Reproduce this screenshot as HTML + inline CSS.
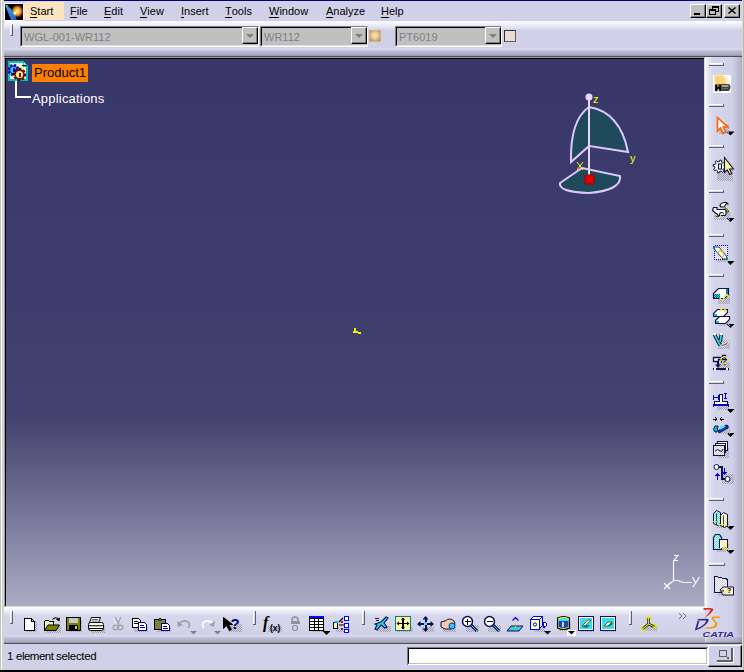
<!DOCTYPE html>
<html><head><meta charset="utf-8">
<style>
*{margin:0;padding:0;box-sizing:border-box}
html,body{width:744px;height:672px;overflow:hidden;background:#d0d0e8;font-family:"Liberation Sans",sans-serif;font-size:11px;color:#000}
.a{position:absolute}
#frameL{left:0;top:0;width:4px;height:672px;background:linear-gradient(90deg,#c0c0c0 0,#c0c0c0 1px,#fff 1px,#fff 2px,#d0d0d0 2px,#d0d0d0 3px,#d4d4d0 3px)}
#topline{left:4px;top:0;width:738px;height:1px;background:#000080}
#frameR{left:742px;top:0;width:2px;height:672px;background:linear-gradient(90deg,#d8d8cc 0,#d8d8cc 1px,#b8b8b4 1px)}
#menubar{left:4px;top:1px;width:738px;height:20px;background:#d0d0e8}
.mi{position:absolute;top:4px;font-size:11px;line-height:14px}
.mi u{text-decoration:none;position:relative}.mi u:after{content:"";position:absolute;left:0;right:0;top:12px;height:1px;background:#000}
#tb1{left:4px;top:21px;width:738px;height:35px;background:linear-gradient(180deg,#fcfcff 0,#f6f6fc 2px,#dedef0 7px,#d0d0e8 9px,#d0d0e8 27px,#e2e2f2 28px,#c8c8de 29px,#b0b0ca 32px,#a8a8c2 34px,#909098 35px)}
#tb1line{left:4px;top:56px;width:738px;height:1px;background:#505050}
#vpborder{left:4px;top:57px;width:701px;height:550px;background:#d8d8d4;border-top:1px solid #a0a0a0;border-left:1px solid #a0a0a0}
#vpblack{left:5px;top:58px;width:699px;height:548px;background:#000}
#vp{left:6px;top:59px;width:698px;height:547px;background:linear-gradient(180deg,#37376a 0,#3e3e6e 250px,#43436f 358px,#58587f 400px,#767698 455px,#acacc6 547px)}
#rtb{left:705px;top:57px;width:37px;height:586px;background:linear-gradient(90deg,#ffffff 0,#f4f4fa 1px,#e0e0f0 4px,#d4d4ea 10px,#d0d0e8 27px,#c4c4dc 31px,#acacc6 37px)}
#btb{left:4px;top:607px;width:701px;height:36px;background:linear-gradient(180deg,#ffffff 0,#f6f6fc 2px,#ececf6 4px,#d6d6ec 9px,#d0d0e8 28px,#e0e0f2 29px,#c8c8de 30px,#b0b0ca 33px,#a8a8c2 35px,#909098 36px)}
#btbline{left:4px;top:643px;width:738px;height:1px;background:#505050}
#status{left:4px;top:644px;width:738px;height:26px;background:#d0d0e8}
#botline{left:0;top:670px;width:744px;height:2px;background:#000}
.combo{position:absolute;top:26px;height:21px;background:#c0c0c0;border-top:1px solid #808080;border-left:1px solid #808080;border-bottom:1px solid #fff;border-right:1px solid #fff}
.combo .in{position:absolute;left:0;top:0;right:0;bottom:0;border-top:1px solid #000;border-left:1px solid #000;border-bottom:1px solid #dfdfdf;border-right:1px solid #dfdfdf}
.combo .txt{position:absolute;left:3px;top:3px;font-size:11px;color:#808080;line-height:14px}
.combo .btn{position:absolute;right:0;top:0;width:16px;height:17px;background:#c0c0c0;border-top:1px solid #fff;border-left:1px solid #fff;border-right:1px solid #000;border-bottom:1px solid #000;box-shadow:inset -1px -1px 0 #808080}
.combo .btn:after{content:"";position:absolute;left:3px;top:6px;border-left:4px solid transparent;border-right:4px solid transparent;border-top:4px solid #808080}
.grip{position:absolute;width:3px;border-left:1px solid #fff;border-top:1px solid #fff;border-right:1px solid #606060;border-bottom:1px solid #606060}
.hgrip{position:absolute;height:3px;width:14px;border-left:1px solid #fff;border-top:1px solid #fff;border-right:1px solid #606060;border-bottom:1px solid #606060}
.wbtn{position:absolute;top:4px;width:16px;height:14px;background:#c0c0c0;border-top:1px solid #fff;border-left:1px solid #fff;border-right:1px solid #000;border-bottom:1px solid #000;box-shadow:inset -1px -1px 0 #808080}
</style></head><body>
<div id="frameL" class="a"></div>
<div id="topline" class="a"></div>
<div id="frameR" class="a"></div>
<div id="menubar" class="a"></div>
<div class="a" style="left:4px;top:1px;width:738px;height:1px;background:#d8d8dc"></div>
<!-- logo -->
<div class="a" style="left:4px;top:3px;width:20px;height:18px;background:#fff"></div>
<div class="a" style="left:5px;top:4px;width:18px;height:16px;background:#000;overflow:hidden">
 <svg width="18" height="16" viewBox="0 0 18 16"><defs>
 <radialGradient id="lg" cx="0.62" cy="0.45" r="0.45"><stop offset="0" stop-color="#fffce0"/><stop offset="0.25" stop-color="#ffd040"/><stop offset="0.6" stop-color="#e07020"/><stop offset="1" stop-color="#401030" stop-opacity="0"/></radialGradient>
 <linearGradient id="lb" x1="0" y1="0" x2="1" y2="1"><stop offset="0" stop-color="#40a0ff"/><stop offset="1" stop-color="#2060c0"/></linearGradient></defs>
 <rect x="3" y="0" width="15" height="16" fill="url(#lg)"/>
 <path d="M0 1 L2.5 1 L12 15.5 L8.5 16 L6 16 Z" fill="url(#lb)"/>
 <path d="M4 4 L10 13 L11 12 L5 3.5Z" fill="#30d0d0" opacity="0.7"/>
 <circle cx="10" cy="9" r="1.5" fill="#fff" opacity="0.8"/>
 </svg>
</div>
<div class="a" style="left:24px;top:2px;width:40px;height:18px;background:#fce4c0"></div>
<div class="mi" style="left:30px"><u>S</u>tart</div>
<div class="mi" style="left:70px"><u>F</u>ile</div>
<div class="mi" style="left:104px"><u>E</u>dit</div>
<div class="mi" style="left:140px"><u>V</u>iew</div>
<div class="mi" style="left:181px"><u>I</u>nsert</div>
<div class="mi" style="left:225px"><u>T</u>ools</div>
<div class="mi" style="left:269px"><u>W</u>indow</div>
<div class="mi" style="left:326px"><u>A</u>nalyze</div>
<div class="mi" style="left:381px"><u>H</u>elp</div>
<div class="wbtn" style="left:690px"></div>
<div class="wbtn" style="left:706px"></div>
<div class="wbtn" style="left:724px"></div>
<svg class="a" style="left:688px;top:3px" width="54" height="17" viewBox="688 3 54 17" shape-rendering="crispEdges">
<rect x="694" y="13" width="6" height="2" fill="#000"/>
<rect x="712" y="6" width="6" height="5" fill="none" stroke="#000"/><rect x="712" y="6" width="6" height="1" fill="#000"/>
<rect x="712" y="6.5" width="6" height="1.5" fill="#000"/>
<rect x="709.5" y="9.5" width="6" height="5" fill="#c0c0c0" stroke="#000"/>
<rect x="709.5" y="9.5" width="6" height="1.5" fill="#000"/>
<path d="M728.5 7.5 l7 6 M735.5 7.5 l-7 6" stroke="#000" stroke-width="1.6" shape-rendering="auto"/>
</svg>

<div id="tb1" class="a"></div>
<div id="tb1line" class="a"></div>
<div class="grip" style="left:10px;top:24px;height:12px"></div>
<div class="combo" style="left:20px;width:239px"><div class="in"></div><div class="txt">WGL-001-WR112</div><div class="btn"></div></div>
<div class="combo" style="left:260px;width:108px"><div class="in"></div><div class="txt">WR112</div><div class="btn"></div></div>
<div class="a" style="left:369px;top:30px;width:12px;height:12px;background:radial-gradient(circle at 50% 45%,#f8e8c8 0,#e8c890 45%,#b08048 100%);border:1px solid #d0b080"></div>
<div class="combo" style="left:395px;width:107px"><div class="in"></div><div class="txt">PT6019</div><div class="btn"></div></div>
<div class="a" style="left:504px;top:30px;width:12px;height:12px;background:#eadcd2;border:1px solid #303030;border-right-color:#606060;border-bottom-color:#606060"></div>

<div id="vpborder" class="a"></div>
<div id="vpblack" class="a"></div>
<div id="vp" class="a"></div>


<!-- tree -->
<div class="a" style="left:8px;top:61px;width:20px;height:21px">
<svg width="20" height="21" viewBox="8 61 20 21" shape-rendering="crispEdges">
<path d="M9 62 H23 L27 66 V80 H9 Z" fill="url(#dy)" stroke="#00c0c8" stroke-width="2"/>
<path d="M23 62 V66 H27" fill="#a0f0f0" stroke="#00c0c8" stroke-width="1"/>
<rect x="22" y="65" width="5" height="1" fill="#101040"/>
<path d="M17.7 70.3 L19.2 70.8 L18.7 72.6 L17.1 72.1 L16.3 73.2 L17.0 74.6 L15.4 75.5 L14.5 74.1 L13.2 74.2 L12.7 75.7 L10.9 75.2 L11.4 73.6 L10.3 72.8 L8.9 73.5 L8.0 71.9 L9.4 71.0 L9.3 69.7 L7.8 69.2 L8.3 67.4 L9.9 67.9 L10.7 66.8 L10.0 65.4 L11.6 64.5 L12.5 65.9 L13.8 65.8 L14.3 64.3 L16.1 64.8 L15.6 66.4 L16.7 67.2 L18.1 66.5 L19.0 68.1 L17.6 69.0Z" fill="#0000ff" stroke="#000060" stroke-width="0.6" shape-rendering="auto"/>
<circle cx="13.5" cy="70" r="3.2" fill="#30d0ff" shape-rendering="auto"/>
<rect x="12.5" y="68" width="2" height="4" fill="#0000a0"/>
<path d="M24.1 73.9 L25.7 74.1 L25.5 76.1 L23.8 76.0 L23.2 77.3 L24.1 78.6 L22.6 79.9 L21.5 78.6 L20.1 79.1 L19.9 80.7 L17.9 80.5 L18.0 78.8 L16.7 78.2 L15.4 79.1 L14.1 77.6 L15.4 76.5 L14.9 75.1 L13.3 74.9 L13.5 72.9 L15.2 73.0 L15.8 71.7 L14.9 70.4 L16.4 69.1 L17.5 70.4 L18.9 69.9 L19.1 68.3 L21.1 68.5 L21.0 70.2 L22.3 70.8 L23.6 69.9 L24.9 71.4 L23.6 72.5Z" fill="#c00000" stroke="#000" stroke-width="0.9" shape-rendering="auto"/>
<circle cx="19.5" cy="74.5" r="3.6" fill="#f8f080" shape-rendering="auto"/>
<rect x="18.5" y="72.5" width="2" height="4" fill="#a00000"/>
</svg></div>
<div class="a" style="left:15px;top:81px;width:2px;height:17px;background:#fff"></div>
<div class="a" style="left:15px;top:96px;width:16px;height:2px;background:#fff"></div>
<div class="a" style="left:32px;top:64px;width:56px;height:18px;background:#ff8000;border-radius:1px"></div>
<div class="a" style="left:34px;top:65px;font-size:13px;line-height:16px;color:#000">Product1</div>
<div class="a" style="left:32px;top:91px;font-size:13px;line-height:16px;color:#fff;letter-spacing:0.2px">Applications</div>
<!-- compass -->
<svg class="a" style="left:540px;top:80px" width="120" height="120" viewBox="540 80 120 120">
<path d="M589 146 L589 107 Q620 112 628 152 Z" fill="#1f4a5c" stroke="#e0c8f8" stroke-width="2"/>
<path d="M589 146 L589 107 Q570 120 571 162 Z" fill="#1f4a5c" stroke="#e0c8f8" stroke-width="2"/>
<path d="M582 168 L620 176 Q622 190 589 193 Q558 192 560 183 Z" fill="#1f4a5c" stroke="#e0c8f8" stroke-width="2"/>
<line x1="589" y1="98" x2="589" y2="176" stroke="#e8d8ff" stroke-width="2"/>
<circle cx="589" cy="97" r="3.5" fill="#e8d8ff"/>
<rect x="585" y="175" width="9" height="9" fill="#e00000" stroke="#a00000"/>
<text x="593" y="103" font-size="11" fill="#ffff00" font-family="Liberation Sans">z</text>
<text x="630" y="162" font-size="11" fill="#ffff00" font-family="Liberation Sans">y</text>
<path d="M577 162 L583 170 M583 162 L577 170" stroke="#ffff00" stroke-width="1"/>
</svg>
<!-- small yellow mark -->
<div class="a" style="left:354px;top:328px;width:2px;height:5px;background:#f0f000"></div><div class="a" style="left:353px;top:331px;width:5px;height:2px;background:#f0f000"></div><div class="a" style="left:358px;top:332px;width:3px;height:2px;background:#f0f000"></div>
<!-- axis bottom right -->
<svg class="a" style="left:655px;top:548px" width="50" height="50" viewBox="655 548 50 50">
<g stroke="#fff" fill="none" stroke-width="1.1">
<path d="M673.5 561 V580.5"/>
<path d="M674 555.5 H678 L674 560.5 H678"/>
<path d="M673.5 580.5 L666.5 586.5"/>
<path d="M664 583 L670 589 M670 583 L664 589"/>
<path d="M673.5 580.5 H678 L683 582.5 H692"/>
<path d="M692.5 577 L696 583.5 M699.5 577 L693 587"/>
</g></svg>
<div id="rtb" class="a"></div>
<!--RTBICONS-->
<svg class="a" style="left:0;top:0" width="744" height="672" viewBox="0 0 744 672" shape-rendering="crispEdges">
<defs>
<pattern id="sh" width="2" height="2" patternUnits="userSpaceOnUse"><rect x="0" y="0" width="1" height="1" fill="#a0a0ac"/><rect x="1" y="1" width="1" height="1" fill="#a0a0ac"/></pattern>
<pattern id="dy" width="2" height="2" patternUnits="userSpaceOnUse"><rect width="2" height="2" fill="#fff"/><rect x="0" y="0" width="1" height="1" fill="#f8e878"/><rect x="1" y="1" width="1" height="1" fill="#f8e878"/></pattern>
<pattern id="dc" width="2" height="2" patternUnits="userSpaceOnUse"><rect width="2" height="2" fill="#40e0f0"/><rect x="0" y="0" width="1" height="1" fill="#fff"/><rect x="1" y="1" width="1" height="1" fill="#fff"/></pattern>
<pattern id="dw" width="2" height="2" patternUnits="userSpaceOnUse"><rect width="2" height="2" fill="#fff"/><rect x="0" y="0" width="1" height="1" fill="#c8c8e0"/><rect x="1" y="1" width="1" height="1" fill="#c8c8e0"/></pattern>
<pattern id="dt" width="2" height="2" patternUnits="userSpaceOnUse"><rect width="2" height="2" fill="#008080"/><rect x="0" y="0" width="1" height="1" fill="#40c0c0"/><rect x="1" y="1" width="1" height="1" fill="#40c0c0"/></pattern>
</defs>
<!-- separators right toolbar -->
<g>
<rect x="709" y="63" width="15" height="1" fill="#fff"/><rect x="709" y="65" width="15" height="1" fill="#606070"/><rect x="723" y="63" width="1" height="3" fill="#606070"/><rect x="709" y="64" width="13" height="1" fill="#e8e8f4"/>
<rect x="709" y="104" width="15" height="1" fill="#fff"/><rect x="709" y="106" width="15" height="1" fill="#606070"/><rect x="723" y="104" width="1" height="3" fill="#606070"/>
<rect x="709" y="145" width="15" height="1" fill="#fff"/><rect x="709" y="147" width="15" height="1" fill="#606070"/><rect x="723" y="145" width="1" height="3" fill="#606070"/>
<rect x="709" y="190" width="15" height="1" fill="#fff"/><rect x="709" y="192" width="15" height="1" fill="#606070"/><rect x="723" y="190" width="1" height="3" fill="#606070"/>
<rect x="709" y="234" width="15" height="1" fill="#fff"/><rect x="709" y="236" width="15" height="1" fill="#606070"/><rect x="723" y="234" width="1" height="3" fill="#606070"/>
<rect x="709" y="274" width="15" height="1" fill="#fff"/><rect x="709" y="276" width="15" height="1" fill="#606070"/><rect x="723" y="274" width="1" height="3" fill="#606070"/>
<rect x="709" y="381" width="15" height="1" fill="#fff"/><rect x="709" y="383" width="15" height="1" fill="#606070"/><rect x="723" y="381" width="1" height="3" fill="#606070"/>
<rect x="709" y="498" width="15" height="1" fill="#fff"/><rect x="709" y="500" width="15" height="1" fill="#606070"/><rect x="723" y="498" width="1" height="3" fill="#606070"/>
<rect x="709" y="563" width="16" height="1" fill="#fff"/><rect x="709" y="565" width="16" height="1" fill="#606070"/><rect x="724" y="563" width="1" height="3" fill="#606070"/>
</g>
<!-- dropdown triangles -->
<g fill="#000" shape-rendering="auto">
<path d="M726.5 131.5 h8 l-4 4z"/>
<path d="M726.5 218 h8 l-4 4z"/>
<path d="M726.5 261 h8 l-4 4z"/>
<path d="M726.5 324 h8 l-4 4z"/>
<path d="M726.5 409 h8 l-4 4z"/>
<path d="M726.5 433 h8 l-4 4z"/>
<path d="M726.5 526 h8 l-4 4z"/>
<path d="M726.5 550 h8 l-4 4z"/>
</g>
<!-- icon1 projector -->
<rect x="713" y="75" width="18" height="18" fill="#fff"/>
<path d="M714 75.5 L723 75.5 Q726 78 726 84 L715 85 Z" fill="#f8d474" shape-rendering="auto"/>
<path d="M723 75.5 Q728 77 730 83 L726 84 Q726 78 723 75.5 Z" fill="#fcecc4" shape-rendering="auto"/>
<path d="M718 84 L729 84 Q731 85 730.5 88 L729 91 L720 91 Z" fill="#404040" shape-rendering="auto"/>
<path d="M719 85 L729 85 L728 87 L720 87 Z" fill="#a0a0a0" shape-rendering="auto"/>
<path d="M720 88.5 L728 88.5" stroke="#707070" stroke-width="0.8" shape-rendering="auto"/>
<path d="M715 84.5 h2.5 v2 h1.5 v-2 h2.5 v6.5 h-2.5 v-2 h-1.5 v2 h-2.5 z" fill="#000" stroke="#807040" stroke-width="0.6" shape-rendering="auto"/>
<!-- icon2 arrow -->
<rect x="719" y="124" width="10" height="10" fill="url(#sh)"/>
<path d="M717.5 117.5 L717.5 131 L720.5 128 L723 133.5 L725.5 132 L723.2 127 L727.5 127 Z" fill="#fff" stroke="#ff6000" stroke-width="1.6" shape-rendering="auto"/>
<!-- icon3 gear + arrow -->
<rect x="717" y="169" width="16" height="12" fill="url(#sh)"/>
<path d="M724.3 166.4 L726.0 166.9 L725.6 168.7 L723.9 168.4 L722.9 169.8 L723.8 171.4 L722.3 172.4 L721.2 171.0 L719.6 171.3 L719.1 173.0 L717.3 172.6 L717.6 170.9 L716.2 169.9 L714.6 170.8 L713.6 169.3 L715.0 168.2 L714.7 166.6 L713.0 166.1 L713.4 164.3 L715.1 164.6 L716.1 163.2 L715.2 161.6 L716.7 160.6 L717.8 162.0 L719.4 161.7 L719.9 160.0 L721.7 160.4 L721.4 162.1 L722.8 163.1 L724.4 162.2 L725.4 163.7 L724.0 164.8Z" fill="#fff" stroke="#101040" stroke-width="1" shape-rendering="auto"/>
<path d="M718.5 164 v5 h3 v-5 z" fill="none" stroke="#101040" stroke-width="1.2" shape-rendering="auto"/>
<path d="M724.5 157.5 L724.5 172.5 L727.2 170 L729.8 174.6 L731.8 173.6 L729.5 169 L733.5 169 Z" fill="#f8f890" stroke="#101040" stroke-width="1.1" shape-rendering="auto"/>
<!-- icon4 sketch hammer -->
<rect x="714" y="212" width="16" height="8" fill="url(#sh)"/>
<path d="M713.5 207.5 h3.5 v2 h9 v5 l-1 1 h-7 l-1 -2 h-1 l-3.5 -3z" fill="#fff" stroke="#101050" stroke-width="1.2" shape-rendering="auto"/>
<path d="M715 215.5 q1 2 3 1.5 q1.5 -0.5 1.5 -2.5 q0.5 -2 2 -2 q2 0 2 2" fill="none" stroke="#101010" stroke-width="1.2" shape-rendering="auto"/>
<path d="M714.5 214.5 q0 3.5 3.5 3.5 q2.5 0 2.5 -3 q0.5 -1.5 1.5 -1.5 q1.5 0 1.5 1.5" fill="none" stroke="#f8f0a0" stroke-width="0.9" shape-rendering="auto"/>
<path d="M720 205 q1 -2 4 -2.5 q3 -0.5 4 1.5 l-2 0 l-2 3 l-2 0 q-2 0 -2 -2z" fill="#fff" stroke="#101010" stroke-width="1.1" shape-rendering="auto"/>
<path d="M724.5 208 l4 4" stroke="#101010" stroke-width="2.2" shape-rendering="auto"/>
<path d="M724.5 208 l4 4" stroke="#f0e000" stroke-width="1.2" stroke-dasharray="1.2 0.6" shape-rendering="auto"/>
<!-- icon5 dotted box sketch -->
<rect x="716" y="250" width="12" height="12" fill="url(#sh)"/>
<rect x="714.5" y="245.5" width="13" height="14" fill="url(#dw)" stroke="#0000ff" stroke-dasharray="1 1"/>
<path d="M714 247 h5 l8 10 v2 h-4 l-8 -9z" fill="#fff" stroke="#303050" stroke-width="1" shape-rendering="auto"/>
<rect x="713" y="246" width="2" height="3" fill="#009090"/><rect x="726" y="257" width="2" height="3" fill="#009090"/>
<path d="M718 253 q3 -4 5 0 q2 4 -2 4" fill="none" stroke="#e8d020" stroke-width="1.5" shape-rendering="auto"/>
<!-- icon6 block S -->
<rect x="718" y="294" width="12" height="10" fill="url(#sh)"/>
<path d="M713.5 293.5 l5 -5 h10 v6 l-4 4 h-11z" fill="#fff" stroke="#101050" stroke-width="1.2" shape-rendering="auto"/>
<rect x="714" y="294" width="6" height="4" fill="url(#dt)"/>
<rect x="726" y="289" width="2" height="5" fill="#009090"/>
<path d="M720 298 q2 4 4 0 q2 -5 5 -1" fill="none" stroke="#f0e040" stroke-width="1.6" shape-rendering="auto"/>
<!-- icon7 -->
<rect x="719" y="316" width="11" height="10" fill="url(#sh)"/>
<path d="M713.5 313.5 l4 -4 h10 v3 l-4 4 h-10z" fill="#fff" stroke="#101050" stroke-width="1.1" shape-rendering="auto"/>
<path d="M715.5 320.5 l4 -4 h10 v3 l-4 4 h-10z" fill="#fff" stroke="#101050" stroke-width="1.1" shape-rendering="auto"/>
<rect x="714" y="314" width="3" height="2" fill="#00c0d0"/><rect x="716" y="321" width="3" height="2" fill="#00c0d0"/>
<path d="M720 311 q2 -4 5 -2 q-1 4 2 2" fill="none" stroke="#f0e040" stroke-width="1.5" shape-rendering="auto"/>
<!-- icon8 V -->
<rect x="718" y="340" width="12" height="9" fill="url(#sh)"/>
<path d="M721.5 344 q3 1 5.5 -2 l2 -1 q-1 4 -4 5 q-3 1 -4.5 -1z" fill="#606060" stroke="#fff" stroke-width="0.8" shape-rendering="auto"/>
<path d="M714.5 334.5 l4.5 9 l1.5 1.5 M721.5 334 l-1.5 8" stroke="#000" stroke-width="3.6" fill="none" shape-rendering="auto"/>
<path d="M714.5 334.5 l4.5 9 l1.5 1.5 M721.5 334 l-1.5 8" stroke="#30d8e8" stroke-width="1.8" fill="none" shape-rendering="auto"/>
<rect x="713" y="333" width="3" height="2" fill="#fff"/><rect x="720" y="333" width="3" height="2" fill="#fff"/>
<!-- icon9 -->
<rect x="719" y="362" width="11" height="9" fill="url(#sh)"/>
<path d="M713.5 357.5 h9 v-2 h3 v4 h-7 v2 h-5z" fill="#fff" stroke="#101050" stroke-width="1.3" shape-rendering="auto"/>
<path d="M721.5 362.5 q-1 -3 1.5 -4.5 q2.5 -1 3.5 1 q0.5 1.5 -1.5 2.5 q-2 1 -1.5 2.5 q0.5 1 2 0.5" fill="none" stroke="#101010" stroke-width="1" shape-rendering="auto"/>
<path d="M721 361 q-0.5 -3 2 -4 q3 -1 3.5 1.5 M722 363.5 q2 1 4 -1" fill="none" stroke="#f0e040" stroke-width="1.3" shape-rendering="auto"/>
<rect x="717" y="361" width="2" height="4" fill="#101050"/><path d="M715 364.5 h6 l-3 3.5z" fill="#101050" shape-rendering="auto"/>
<rect x="713" y="368" width="16" height="2" fill="#101050"/><rect x="714" y="368" width="2" height="2" fill="#fff"/><rect x="726" y="368" width="2" height="2" fill="#fff"/>
<!-- icon10 dimension -->
<rect x="717" y="402" width="12" height="8" fill="url(#sh)"/>
<rect x="713" y="395" width="1" height="5" fill="#0000ff"/><rect x="713" y="397" width="6" height="1" fill="#0000ff"/><rect x="718" y="395" width="1" height="5" fill="#0000ff"/>
<rect x="724" y="393" width="3" height="1" fill="#0000ff"/><rect x="725" y="393" width="1" height="6" fill="#0000ff"/><rect x="724" y="398" width="3" height="1" fill="#0000ff"/>
<path d="M714 401 h5 v-7 h3 v7 h5 v3 h-13z" fill="#fff" stroke="#101050" stroke-width="1"/>
<rect x="713" y="405" width="16" height="1" fill="#0000ff"/><rect x="713" y="404" width="1" height="3" fill="#0000ff"/><rect x="728" y="404" width="1" height="3" fill="#0000ff"/>
<!-- icon11 arrows + blue -->
<rect x="720" y="426" width="10" height="8" fill="url(#sh)"/>
<path d="M713 419 h4 M715 417 l2 2 l-2 2 M724 419 h-4 M722 417 l-2 2 l2 2" stroke="#000" stroke-width="1" fill="none"/>
<path d="M715 432 q-3 -2 0 -6 l3 0 l-1 6z" fill="#00c0e0" stroke="#101050" shape-rendering="auto"/>
<path d="M718 431 l8 -6 q3 0 2 3 l-9 5z" fill="#0040c0" stroke="#101050" shape-rendering="auto"/>
<path d="M720 429 l5 -3" stroke="#40e0f0" stroke-width="1.5" shape-rendering="auto"/>
<!-- icon12 sheets -->
<rect x="718" y="448" width="11" height="10" fill="url(#sh)"/>
<rect x="717.5" y="441.5" width="10" height="9" fill="#fff" stroke="#101050"/>
<rect x="715.5" y="443.5" width="10" height="9" fill="#fff" stroke="#101050"/>
<rect x="713.5" y="445.5" width="11" height="10" fill="url(#dw)" stroke="#101050" stroke-width="1.2"/>
<path d="M715 451 q3 -3 5 0 q2 2 3 -2" stroke="#101050" fill="none" shape-rendering="auto"/>
<!-- icon13 graph -->
<rect x="722" y="474" width="12" height="10" fill="url(#sh)"/>
<path d="M718 467 h4 v12 h4" stroke="#101050" stroke-width="1.2" fill="none"/>
<ellipse cx="716.5" cy="467" rx="2.5" ry="2.5" fill="#fff" stroke="#101050" shape-rendering="auto"/>
<ellipse cx="727.5" cy="479" rx="2.5" ry="2.5" fill="#fff" stroke="#101050" shape-rendering="auto"/>
<rect x="724" y="468" width="1" height="5" fill="#0000ff"/><path d="M722 472 h5 l-2.5 3z" fill="#0000ff"/>
<rect x="717" y="475" width="1" height="5" fill="#0000ff"/><path d="M715 476 h5 l-2.5 -3z" fill="#0000ff"/>
<!-- icon14 two boxes -->
<rect x="717" y="522" width="12" height="6" fill="url(#sh)"/>
<path d="M713.5 513.5 L716.5 510.5 L720.5 512.5 V523.5 L717.5 525.5 L713.5 523.5 Z" fill="url(#dc)" stroke="#101050" shape-rendering="auto"/>
<path d="M716.5 513.5 V525" stroke="#101050" stroke-width="0.8" shape-rendering="auto"/>
<path d="M720.5 515.5 L723.5 512.5 L727.5 514.5 V525.5 L724.5 527.5 L720.5 525.5 Z" fill="url(#dy)" stroke="#101050" shape-rendering="auto"/>
<path d="M723.5 515.5 V527" stroke="#101050" stroke-width="0.8" shape-rendering="auto"/>
<rect x="712" y="521" width="6" height="1" fill="#e8e000"/><rect x="718" y="524" width="7" height="1" fill="#e8e000"/>
<!-- icon15 -->
<rect x="717" y="544" width="12" height="8" fill="url(#sh)"/>
<path d="M713.5 537.5 l2 -3 h4 l2 3 v12 h-8z" fill="url(#dc)" stroke="#101050" stroke-width="1.2" shape-rendering="auto"/>
<rect x="719.5" y="539.5" width="8" height="8" fill="url(#dy)" stroke="#101050"/>
<rect x="720" y="543" width="2" height="5" fill="#fff"/><rect x="722" y="547" width="5" height="2" fill="#e0e000"/>
<!-- icon16 folder tag -->
<rect x="718" y="590" width="15" height="6" fill="url(#sh)"/>
<path d="M714.5 576.5 h3 l1 1 h3 l1 1 h3 l2 1 v13 h-13z" fill="url(#dw)" stroke="#101050" stroke-width="1.1"/>
<path d="M720 590 l3 -3 h10.5 v8 h-10.5z" fill="url(#dy)" stroke="#101050" shape-rendering="auto"/>
<circle cx="722.5" cy="591" r="1" fill="none" stroke="#404040" shape-rendering="auto"/>
<text x="727" y="593" font-size="7" font-weight="bold" font-family="Liberation Sans" fill="#000">?</text>
</svg>

<!--/RTBICONS-->
<div id="btb" class="a"></div>
<div class="a" style="left:705px;top:609px;width:8px;height:26px;background:linear-gradient(90deg,#d0d0e8 0,rgba(210,210,234,0) 8px)"></div>
<div id="btbline" class="a"></div>
<div class="a" style="left:705px;top:635px;width:37px;height:8px;background:linear-gradient(180deg,rgba(255,255,255,0) 0,rgba(255,255,255,.35) 1px,rgba(120,120,150,.15) 2px,rgba(90,90,130,.3) 7px,rgba(60,60,60,.6) 8px)"></div>
<!--BTBICONS-->
<svg class="a" style="left:0;top:0" width="744" height="672" viewBox="0 0 744 672" shape-rendering="crispEdges">
<!-- grips -->
<g>
<rect x="10" y="611" width="1" height="13" fill="#fff"/><rect x="12" y="611" width="1" height="13" fill="#606070"/><rect x="10" y="623" width="3" height="1" fill="#606070"/>
<rect x="253" y="611" width="1" height="13" fill="#fff"/><rect x="255" y="611" width="1" height="13" fill="#606070"/><rect x="253" y="624" width="3" height="1" fill="#606070"/>
<rect x="362" y="611" width="1" height="13" fill="#fff"/><rect x="364" y="611" width="1" height="13" fill="#606070"/><rect x="362" y="624" width="3" height="1" fill="#606070"/>
<rect x="629" y="611" width="1" height="13" fill="#fff"/><rect x="631" y="611" width="1" height="13" fill="#606070"/><rect x="629" y="624" width="3" height="1" fill="#606070"/>
</g>
<!-- new -->
<rect x="26" y="621" width="11" height="11" fill="url(#sh)"/>
<path d="M24.5 618.5 h7 l3 3 v9 h-10z" fill="#fff" stroke="#000"/>
<path d="M31.5 618.5 v3 h3" fill="none" stroke="#000"/>
<!-- open -->
<rect x="46" y="626" width="15" height="7" fill="url(#sh)"/>
<path d="M44.5 621.5 l1 -1.5 h3 l1 1.5 h4 v9 h-9z" fill="url(#dy)" stroke="#000"/>
<path d="M44.5 630.5 l3.5 -5.5 h11.5 l-3.5 5.5z" fill="#808000" stroke="#000" shape-rendering="auto"/>
<path d="M52.5 619.5 q2.5 -3 5.5 -1" fill="none" stroke="#000" stroke-width="1.1" shape-rendering="auto"/>
<path d="M56 619.5 l3.5 2 l0.5 -4z" fill="#000" shape-rendering="auto"/>
<!-- save -->
<rect x="69" y="621" width="13" height="11" fill="url(#sh)"/>
<rect x="66.5" y="617.5" width="14" height="13" fill="#808000" stroke="#000"/>
<rect x="69" y="618" width="9" height="5" fill="#c8c8c8"/>
<rect x="69" y="625" width="9" height="5" fill="#000"/>
<rect x="75" y="626" width="2" height="3" fill="#c0c0c0"/>
<!-- print -->
<rect x="91" y="626" width="14" height="7" fill="url(#sh)"/>
<path d="M91.5 617.5 h9 l-2 5 h-9z" fill="#fff" stroke="#000" shape-rendering="auto"/>
<path d="M92 619.5 h6 M91.5 621 h6" stroke="#000" stroke-width="0.6" shape-rendering="auto"/>
<rect x="88.5" y="622.5" width="15" height="8" rx="2" fill="#fff" stroke="#000" shape-rendering="auto"/>
<rect x="89" y="625" width="14" height="2" fill="#404040"/>
<rect x="89" y="626" width="14" height="1" fill="#c0c0c0"/>
<rect x="94" y="626" width="4" height="1" fill="#e0c000"/>
<rect x="89" y="628" width="14" height="1" fill="#000"/>
<!-- cut -->
<path d="M115 617 l4 8 M121 617 l-4 8" stroke="#a0a0a8" stroke-width="1.2" fill="none" shape-rendering="auto"/>
<circle cx="115.5" cy="627.5" r="2.3" fill="none" stroke="#a0a0a8" stroke-width="1.2" shape-rendering="auto"/>
<circle cx="120.5" cy="627.5" r="2.3" fill="none" stroke="#a0a0a8" stroke-width="1.2" shape-rendering="auto"/>
<path d="M113 618 l4 7" stroke="#fff" stroke-width="0.8" shape-rendering="auto"/>
<!-- copy -->
<rect x="134" y="627" width="14" height="5" fill="url(#sh)"/>
<path d="M132.5 618.5 h6 l2 2 v7 h-8z" fill="#fff" stroke="#000"/>
<rect x="134" y="621" width="4" height="1" fill="#000"/><rect x="134" y="623" width="5" height="1" fill="#000"/>
<path d="M138.5 622.5 h6 l2 2 v6 h-8z" fill="#fff" stroke="#000080" stroke-width="1.2"/>
<rect x="140" y="625" width="4" height="1" fill="#000080"/><rect x="140" y="627" width="5" height="1" fill="#000080"/>
<!-- paste -->
<rect x="157" y="627" width="14" height="5" fill="url(#sh)"/>
<rect x="154.5" y="619.5" width="11" height="10" fill="#808040" stroke="#000"/>
<rect x="155" y="620" width="10" height="9" fill="url(#dol)"/>
<path d="M158 620 l2 -2 l2 2z" fill="#ffff40" stroke="#000" shape-rendering="auto"/>
<path d="M161.5 623.5 h6 l2 2 v5 h-8z" fill="#fff" stroke="#000080" stroke-width="1.2"/>
<rect x="163" y="626" width="4" height="1" fill="#000080"/><rect x="163" y="628" width="5" height="1" fill="#000080"/>
<!-- undo -->
<path d="M179 624 q4 -5 9 -2 q3 3 0 6" fill="none" stroke="#a0a0a8" stroke-width="1.6" shape-rendering="auto"/>
<path d="M177 621 l1 6 l5 -2z" fill="#a0a0a8" shape-rendering="auto"/>
<path d="M190 631 h7 l-3.5 3.5z" fill="#808088" shape-rendering="auto"/>
<!-- redo -->
<path d="M213 624 q-4 -5 -9 -2 q-3 3 0 6" fill="none" stroke="#fff" stroke-width="1.6" shape-rendering="auto"/>
<path d="M215 621 l-1 6 l-5 -2z" fill="#a0a0a8" shape-rendering="auto"/>
<path d="M214 631 h7 l-3.5 3.5z" fill="#808088" shape-rendering="auto"/>
<!-- help -->
<rect x="228" y="624" width="14" height="8" fill="url(#sh)"/>
<path d="M223.5 617.5 v11 l3 -3 l3 5 l2 -1 l-3 -5 h4z" fill="#000" stroke="#000" shape-rendering="auto"/>
<text x="230.5" y="628.5" font-size="15" font-weight="bold" font-family="Liberation Sans" fill="#000080">?</text>
<!-- fx -->
<rect x="268" y="626" width="14" height="6" fill="url(#sh)"/>
<text x="263" y="628" font-size="16" font-style="italic" font-weight="bold" font-family="Liberation Serif" fill="#000">f</text>
<text x="270" y="630.5" font-size="8.5" font-weight="bold" font-family="Liberation Sans" fill="#000">(x)</text>
<!-- lock gray -->
<path d="M292 622 v-2 q0 -3 3 -3 q3 0 3 3 v2" fill="none" stroke="#909098" stroke-width="1.5" shape-rendering="auto"/>
<rect x="291" y="621" width="9" height="3" fill="#909098"/>
<circle cx="295" cy="628" r="2.5" fill="none" stroke="#909098" stroke-width="1.2" shape-rendering="auto"/>
<!-- table -->
<rect x="312" y="628" width="13" height="4" fill="url(#sh)"/>
<rect x="309" y="616" width="15" height="15" fill="#000"/>
<rect x="309" y="616" width="15" height="2" fill="#0000ff"/>
<g fill="#fff">
<rect x="310" y="619" width="4" height="2"/><rect x="315" y="619" width="3" height="2"/><rect x="319" y="619" width="4" height="2"/>
<rect x="310" y="622" width="4" height="2"/><rect x="315" y="622" width="3" height="2"/><rect x="319" y="622" width="4" height="2"/>
<rect x="310" y="625" width="4" height="2"/><rect x="315" y="625" width="3" height="2"/><rect x="319" y="625" width="4" height="2"/>
<rect x="310" y="628" width="4" height="2"/><rect x="315" y="628" width="3" height="2"/><rect x="319" y="628" width="4" height="2"/>
</g>
<path d="M322.5 631 h8 l-4 4z" fill="#000" shape-rendering="auto"/>
<!-- tree -->
<rect x="336" y="628" width="14" height="4" fill="url(#sh)"/>
<rect x="333.5" y="622.5" width="4" height="6" fill="#ffff80" stroke="#000080"/>
<rect x="335" y="621" width="3" height="2" fill="#00c0c0"/>
<path d="M339 622 l4 -4 M339 625 h5" stroke="#000" stroke-width="1.2" shape-rendering="auto"/>
<rect x="344.5" y="616.5" width="4" height="4" fill="#fff" stroke="#0000ff"/>
<rect x="344.5" y="623.5" width="4" height="4" fill="#fff" stroke="#0000ff"/>
<rect x="344.5" y="629.5" width="4" height="3" fill="#fff" stroke="#0000ff"/>
<rect x="341" y="621" width="2" height="2" fill="#e00000"/><rect x="341" y="628" width="2" height="2" fill="#e00000"/>
<!-- fly -->
<rect x="378" y="626" width="13" height="6" fill="url(#sh)"/>
<path d="M375 624 l6 -2 l5 -5 l2 1 l-4 5 l3 4 l-2 1 l-4 -3 l-4 5 l-2 -1 l2 -4 z" fill="#30d0e8" stroke="#101050" stroke-width="1.1" shape-rendering="auto"/>
<path d="M375 618 h4 M376 620 h3" stroke="#101050" stroke-width="1"/>
<!-- fit all -->
<rect x="397" y="627" width="16" height="5" fill="url(#sh)"/>
<rect x="395.5" y="616.5" width="15" height="14" fill="#fcf8a0" stroke="#008080"/>
<path d="M403 618 v11 M397 623.5 h12" stroke="#000" stroke-width="1.2"/>
<path d="M403 617.5 l-2 2.5 h4z M403 629.5 l-2 -2.5 h4z M396.5 623.5 l2.5 -2 v4z M409.5 623.5 l-2.5 -2 v4z" fill="#000" shape-rendering="auto"/>
<!-- pan -->
<rect x="422" y="627" width="12" height="5" fill="url(#sh)"/>
<path d="M425.5 617 v14 M418 624 h15" stroke="#101050" stroke-width="2"/>
<path d="M425.5 616 l-3 3.5 h6z M425.5 632 l-3 -3.5 h6z M417 624 l3.5 -3 v6z M434 624 l-3.5 -3 v6z" fill="#101050" shape-rendering="auto"/>
<rect x="424" y="622" width="3" height="3" fill="#40e0f0"/>
<!-- rotate -->
<rect x="443" y="626" width="13" height="6" fill="url(#sh)"/>
<path d="M441 622 l4 -1 q5 -4 9 0 q2 3 0 6 l-3 2 h-6 l-4 -2z" fill="#f8c8a0" stroke="#101050" shape-rendering="auto"/>
<circle cx="452" cy="626" r="3" fill="#40c0f0" stroke="#0040a0" shape-rendering="auto"/>
<!-- zoom in -->
<rect x="466" y="625" width="13" height="7" fill="url(#sh)"/>
<path d="M471 625 l6 6" stroke="#101050" stroke-width="3" shape-rendering="auto"/>
<path d="M471 625 l6 6" stroke="#40d0e0" stroke-width="1" shape-rendering="auto"/>
<circle cx="467.5" cy="621.5" r="5" fill="#fff" stroke="#101050" stroke-width="1.5" shape-rendering="auto"/>
<path d="M467.5 618.5 v6 M464.5 621.5 h6" stroke="#000" stroke-width="1.6"/>
<!-- zoom out -->
<rect x="488" y="625" width="13" height="7" fill="url(#sh)"/>
<path d="M493 625 l6 6" stroke="#101050" stroke-width="3" shape-rendering="auto"/>
<path d="M493 625 l6 6" stroke="#40d0e0" stroke-width="1" shape-rendering="auto"/>
<circle cx="489.5" cy="621.5" r="5" fill="#fff" stroke="#101050" stroke-width="1.5" shape-rendering="auto"/>
<path d="M486.5 621.5 h6" stroke="#000" stroke-width="1.6"/>
<!-- normal view -->
<path d="M507 631 l4 -5 h12 l-4 5z" fill="#40c8d8" stroke="#101050" shape-rendering="auto"/>
<path d="M515.5 618 v9" stroke="#d00000" stroke-width="1" stroke-dasharray="1 1"/>
<path d="M515.5 628 v-9" stroke="#e0e000" stroke-width="1" stroke-dasharray="1 1" stroke-dashoffset="1"/>
<path d="M512.5 620.5 l3 -3 l3 3" fill="none" stroke="#0000ff" stroke-width="1.2" shape-rendering="auto"/>
<!-- iso cube -->
<rect x="534" y="625" width="11" height="7" fill="url(#sh)"/>
<path d="M530.5 619.5 l3 -3 h9 l-3 3z" fill="#ffffb0" stroke="#0000ff"/>
<path d="M539.5 619.5 l3 -3 v9 l-3 3z" fill="#f0e080" stroke="#0000ff"/>
<rect x="530.5" y="619.5" width="9" height="10" fill="#ffffc0" stroke="#0000ff" stroke-width="1.2"/>
<circle cx="535" cy="624.5" r="1.6" fill="none" stroke="#0000ff" shape-rendering="auto"/>
<path d="M543 622 l3 1 v3 l-3 2z" fill="#fff" stroke="#0000ff"/>
<path d="M544 631 h7 l-3.5 3.5z" fill="#000" shape-rendering="auto"/>
<!-- cylinder -->
<rect x="559" y="624" width="12" height="7" fill="url(#sh)"/>
<path d="M557.5 618 q6 -3 12 0 v10 q-6 3 -12 0z" fill="#ffff00" stroke="#000" stroke-width="1.1" shape-rendering="auto"/>
<path d="M558.5 620 h10 v7 q-5 2 -10 0z" fill="#2040c0" shape-rendering="auto"/>
<path d="M558.5 619 q5 -2 10 0 v2 h-10z" fill="#40e0f0" shape-rendering="auto"/>
<rect x="562" y="622" width="2" height="5" fill="url(#dc)"/>
<rect x="567" y="630" width="9" height="6" fill="#fff"/>
<path d="M568 631 h7 l-3.5 3.5z" fill="#000" shape-rendering="auto"/>
<!-- hide/show -->
<rect x="580" y="627" width="14" height="5" fill="url(#sh)"/>
<rect x="578.5" y="616.5" width="15" height="14" fill="#fff" stroke="#101050"/>
<rect x="580" y="618" width="12" height="11" fill="#40d8f0"/>
<path d="M582 626 l6 -6 h3 l-6 6z" fill="#ffff80" stroke="#404040" stroke-width="0.8" shape-rendering="auto"/>
<path d="M582 627 l3 -2 h5 l-3 3z" fill="#008080" shape-rendering="auto"/>
<!-- swap -->
<rect x="602" y="627" width="14" height="5" fill="url(#sh)"/>
<rect x="600.5" y="616.5" width="15" height="14" fill="#fff" stroke="#101050"/>
<rect x="602" y="618" width="12" height="11" fill="#40d8f0"/>
<path d="M604 626 l4 -4 h4 l-4 4z" fill="#ffff80" stroke="#404040" stroke-width="0.8" shape-rendering="auto"/>
<path d="M608 626 l4 -4 l1 2 l-4 3z" fill="#008080" shape-rendering="auto"/>
<!-- axis -->
<rect x="645" y="625" width="12" height="6" fill="url(#sh)"/>
<path d="M648.5 618 v6 l-6 5 M648.5 624 l6 3" stroke="#101050" stroke-width="2.6" fill="none" shape-rendering="auto"/>
<path d="M648.5 618 v6 l-6 5 M648.5 624 l6 3" stroke="#e0e000" stroke-width="1.2" fill="none" shape-rendering="auto"/>
<path d="M645.5 619.5 l3 -3 l3 3 M654 624 l3 3 l-4 1 M642 626 v4 h4" stroke="#e0e000" stroke-width="1.3" fill="none" shape-rendering="auto"/>
<!-- chevrons -->
<path d="M679 613 l3 3 l-3 3 M683 613 l3 3 l-3 3" stroke="#707080" stroke-width="1" fill="none" shape-rendering="auto"/>
<!-- catia logo -->
<g shape-rendering="auto">
<path d="M703.5 608.3 C707 607.8 711 607.6 712.8 608.6 C713.6 609.3 713 610.6 712 611.8 C710 614 707.5 616.2 704.6 618 C706.5 615.8 709 613 710.3 610.8 C710.8 609.8 710 609.6 708.5 609.6 C706.8 609.6 705 609.8 703.5 610 Z" fill="#e82020"/>
<path d="M697.8 619 L706.5 618.8 C708.6 618.9 709.2 620 708.2 621.6 C706 625.5 701 628.8 694.8 630.6 L697.5 621 L699.3 621 L697.3 628.3 C701.5 626.8 704.6 624.3 706 621.6 C706.5 620.7 706 620.5 705 620.5 L697.5 620.6 Z" fill="#402890"/>
<path d="M720 616.4 L714 616.4 C711.3 616.5 711 618.3 712.3 619.8 L714.7 622.6 C715.6 623.8 715.2 625.3 713.6 626.2 C712 627.1 708.5 627.3 705.5 627.3 L705.2 628.6 C709 628.8 713 628.5 715.4 627.4 C717.7 626.3 718 624.3 716.6 622.6 L714.2 619.6 C713.5 618.7 713.6 617.9 715 617.9 L719.6 617.9 Z" fill="#f0a000"/>
</g>
<text x="702.5" y="636.6" font-size="8" font-weight="bold" font-style="italic" font-family="Liberation Sans" fill="#402890" textLength="31.5" lengthAdjust="spacingAndGlyphs">CATIA</text>
</svg>

<!--/BTBICONS-->
<div id="status" class="a"></div>
<div class="a" style="left:7px;top:649px;font-size:11.5px;line-height:15px;letter-spacing:-0.3px">1</div><div class="a" style="left:16px;top:649px;font-size:11.5px;line-height:15px;letter-spacing:-0.5px">element</div><div class="a" style="left:56px;top:649px;font-size:11.5px;line-height:15px;letter-spacing:-0.3px">selected</div>

<div class="a" style="left:407px;top:647px;width:301px;height:18px;background:#fff;border-top:1px solid #808080;border-left:1px solid #808080"></div>
<div class="a" style="left:408px;top:648px;width:299px;height:16px;background:#fff;border-top:1px solid #000;border-left:1px solid #000;border-right:1px solid #c0c0c0;border-bottom:1px solid #c0c0c0"></div>
<div class="a" style="left:708px;top:645px;width:34px;height:22px;background:#d0d0e8;border-top:1px solid #fff;border-left:1px solid #fff;border-right:1px solid #000;border-bottom:1px solid #000;box-shadow:inset -1px -1px 0 #808080"></div>
<svg class="a" style="left:708px;top:645px" width="34" height="22" viewBox="708 645 34 22" shape-rendering="crispEdges">
<rect x="719.5" y="650.5" width="7" height="6" fill="none" stroke="#606060"/>
<rect x="720" y="651" width="6" height="5" fill="#d0d0e8" stroke="none"/>
<rect x="727" y="657" width="2" height="2" fill="#606060"/>
<rect x="731" y="648" width="2" height="14" fill="#606060"/>
<rect x="717" y="660" width="16" height="2" fill="#606060"/>
<rect x="733" y="648" width="1" height="15" fill="#fff"/>
<rect x="717" y="662" width="17" height="1" fill="#fff"/>
</svg>
<div id="botline" class="a"></div>
</body></html>
